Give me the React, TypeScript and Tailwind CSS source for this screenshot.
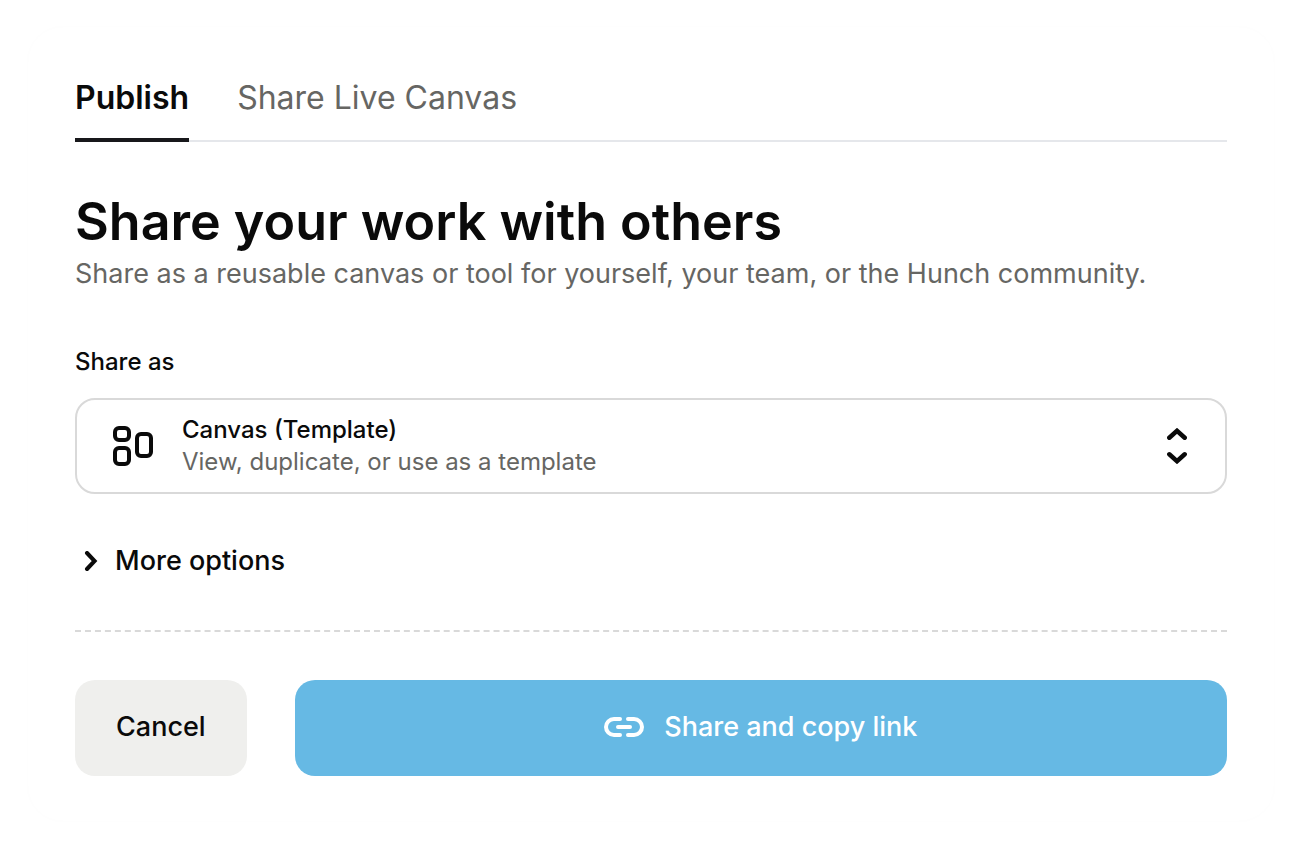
import * as Select from "@radix-ui/react-select";
import * as Tabs from "@radix-ui/react-tabs";
import clsx from "clsx";
import { useState, type ReactNode } from "react";

const shareTypes = [
  {
    id: "canvas",
    title: "Canvas (Template)",
    description: "View, duplicate, or use as a template",
  },
];

export default function App() {
  return (
    <div className="min-h-screen bg-white py-[26px] pl-[27px] pr-[39px] font-['Inter','Liberation_Sans',sans-serif] text-[#0a0a0a]">
      <div className="rounded-[36px] border border-[#fefefe] bg-white px-[47px] pb-[45px] pt-[47px]">
        <Tabs.Root defaultValue="publish">
          <Tabs.List className="flex gap-12 border-b-2 border-[#e5e7eb]">
            <ShareTab value="publish">Publish</ShareTab>
            <ShareTab value="live">Share Live Canvas</ShareTab>
          </Tabs.List>
          <Tabs.Content value="publish">
            <PublishForm />
          </Tabs.Content>
        </Tabs.Root>
      </div>
    </div>
  );
}

const ShareTab = ({
  value,
  children,
}: {
  value: string;
  children: ReactNode;
}) => {
  return (
    <Tabs.Trigger
      value={value}
      className="-mb-0.5 cursor-pointer border-b-4 border-transparent pb-5 pt-1 text-[32px] leading-10 text-[#666663] data-[state=active]:border-[#18181b] data-[state=active]:font-semibold data-[state=active]:text-[#0a0a0a]"
    >
      {children}
    </Tabs.Trigger>
  );
};

const PublishForm = () => {
  const [showOptions, setShowOptions] = useState(false);

  return (
    <form className="pt-12" onSubmit={(e) => e.preventDefault()}>
      <h1 className="text-[52px] font-semibold leading-16">
        Share your work with others
      </h1>
      <p className="text-[27px] leading-10 text-[#666663]">
        Share as a reusable canvas or tool for yourself, your team, or the Hunch
        community.
      </p>
      <label
        htmlFor="share-as"
        className="mt-12 block text-2xl font-medium leading-10"
      >
        Share as
      </label>
      <ShareTypeSelect />
      <button
        type="button"
        aria-expanded={showOptions}
        onClick={() => setShowOptions(!showOptions)}
        className="mt-12 flex cursor-pointer items-center gap-4 pl-2 text-[27px] font-medium leading-[38px]"
      >
        <ChevronIcon
          className={clsx("transition-transform", showOptions && "rotate-90")}
        />
        More options
      </button>
      <hr className="mt-[50px] border-t-2 border-dashed border-[#d9d9d9]" />
      <div className="mt-12 flex gap-12 text-[27px] font-medium">
        <button
          type="button"
          className="h-24 cursor-pointer rounded-[20px] bg-[#efefed] px-[41px] pb-0.5"
        >
          Cancel
        </button>
        <button
          type="submit"
          className="flex h-24 flex-1 cursor-pointer items-center justify-center gap-5 rounded-[20px] bg-[#66b9e4] pb-0.5 text-white"
        >
          <LinkIcon />
          Share and copy link
        </button>
      </div>
    </form>
  );
};

const ShareTypeSelect = () => {
  const [value, setValue] = useState("canvas");
  const selected = shareTypes.find((type) => type.id === value);

  return (
    <Select.Root value={value} onValueChange={setValue}>
      <Select.Trigger
        id="share-as"
        className="mt-4 flex h-24 w-full cursor-pointer items-center rounded-[20px] border-2 border-[#d9d9d9] pl-9 pr-[38px] text-left"
      >
        <CanvasIcon />
        <span className="ml-7 flex-1 text-2xl leading-8">
          <span className="block font-medium">{selected?.title}</span>
          <span className="block text-[#666663]">{selected?.description}</span>
        </span>
        <UpDownIcon />
      </Select.Trigger>
      <Select.Portal>
        <Select.Content className="rounded-[20px] border-2 border-[#d9d9d9] bg-white p-2 text-2xl">
          <Select.Viewport>
            {shareTypes.map((type) => (
              <Select.Item key={type.id} value={type.id} className="px-6 py-3">
                <Select.ItemText>{type.title}</Select.ItemText>
              </Select.Item>
            ))}
          </Select.Viewport>
        </Select.Content>
      </Select.Portal>
    </Select.Root>
  );
};

const CanvasIcon = () => (
  <svg
    width="41"
    height="40"
    viewBox="0 0 41 40"
    fill="none"
    stroke="currentColor"
    strokeWidth="4"
    aria-hidden="true"
  >
    <rect x="2" y="2" width="14" height="12" rx="4" />
    <rect x="2" y="22" width="14" height="16" rx="4" />
    <rect x="24" y="8" width="14" height="22" rx="4" />
  </svg>
);

const UpDownIcon = () => (
  <svg
    width="20"
    height="36"
    viewBox="0 0 20 36"
    fill="none"
    stroke="currentColor"
    strokeWidth="4.5"
    strokeLinecap="round"
    aria-hidden="true"
  >
    <path d="M2.3 9.7L10 2.8l7.7 6.9M2.3 26.3l7.7 6.9 7.7-6.9" />
  </svg>
);

const ChevronIcon = ({ className }: { className?: string }) => (
  <svg
    width="16"
    height="20"
    viewBox="0 0 16 20"
    fill="none"
    stroke="currentColor"
    strokeWidth="4"
    strokeLinecap="round"
    className={className}
    aria-hidden="true"
  >
    <path d="M4 2l7.6 8L4 18" />
  </svg>
);

const LinkIcon = () => (
  <svg
    width="40"
    height="20"
    viewBox="0 0 40 20"
    fill="none"
    stroke="currentColor"
    strokeWidth="4"
    strokeLinecap="round"
    aria-hidden="true"
  >
    <path d="M16 2h-6a8 8 0 0 0 0 16h6M24 2h6a8 8 0 0 1 0 16h-6M14 10h12" />
  </svg>
);
